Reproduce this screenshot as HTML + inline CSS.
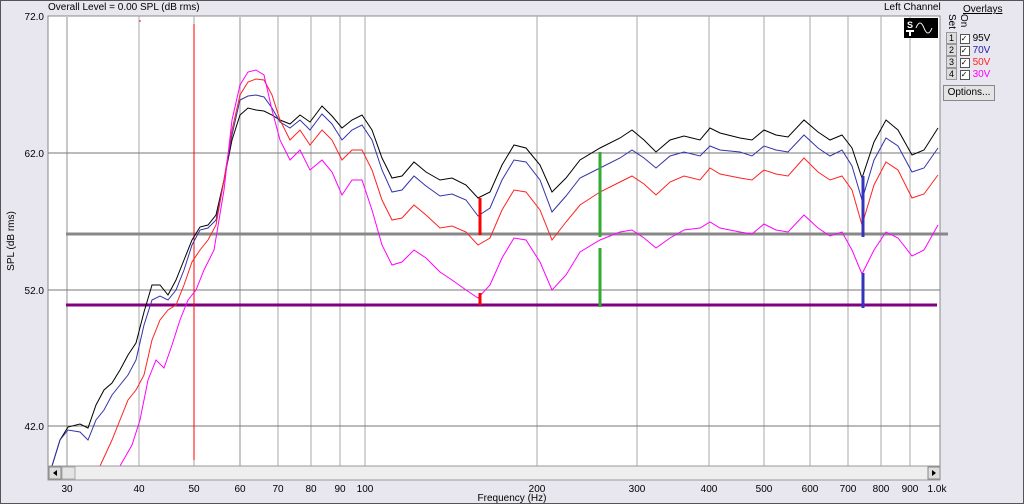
<!DOCTYPE html><html><head><style>
body{margin:0;width:1024px;height:504px;background:#e8e6ee;font-family:"Liberation Sans",sans-serif;font-size:10px;position:relative;overflow:hidden}
.t{position:absolute;white-space:nowrap}
</style></head><body>
<div style="position:absolute;left:0;top:0;width:1022px;height:502px;border:1px solid #555"></div>
<div class="t" style="left:48px;top:2px">Overall Level = 0.00 SPL (dB rms)</div>
<div class="t" style="left:884px;top:2px">Left Channel</div>
<svg width="1024" height="504" style="position:absolute;left:0;top:0" font-family="Liberation Sans" font-size="10">
<rect x="48" y="16" width="892" height="450" fill="#fff" stroke="#888"/>
<g stroke="#aaa" stroke-width="1">
<line x1="67" y1="16" x2="67" y2="466" stroke="#c8c8c8" stroke-width="2"/>
<line x1="139" y1="16" x2="139" y2="466"/>
<line x1="194" y1="16" x2="194" y2="466"/>
<line x1="240" y1="16" x2="240" y2="466" stroke="#c8c8c8" stroke-width="2"/>
<line x1="278" y1="16" x2="278" y2="466"/>
<line x1="311" y1="16" x2="311" y2="466"/>
<line x1="340" y1="16" x2="340" y2="466"/>
<line x1="365" y1="16" x2="365" y2="466"/>
<line x1="537" y1="16" x2="537" y2="466"/>
<line x1="637" y1="16" x2="637" y2="466"/>
<line x1="709" y1="16" x2="709" y2="466"/>
<line x1="764" y1="16" x2="764" y2="466"/>
<line x1="810" y1="16" x2="810" y2="466"/>
<line x1="848" y1="16" x2="848" y2="466"/>
<line x1="881" y1="16" x2="881" y2="466"/>
<line x1="910" y1="16" x2="910" y2="466"/>
</g>
<g stroke="#777"><line x1="48" y1="153" x2="940" y2="153"/><line x1="48" y1="290" x2="940" y2="290"/><line x1="48" y1="426" x2="940" y2="426"/></g>
<line x1="66" y1="234" x2="948" y2="234" stroke="#888" stroke-width="3"/>
<line x1="66" y1="305" x2="937" y2="305" stroke="#800080" stroke-width="3"/>
<line x1="194" y1="24" x2="194" y2="460" stroke="#f00"/>
<polyline fill="none" stroke="#000" points="52,466 60,440 68,427 80,424 88,428 96,405 104,390 112,383 120,370 128,355 136,343 144,312 152,285 160,285 168,295 176,280 184,260 192,240 200,227 208,225 216,215 224,180 232,140 240,115 248,108 256,110 264,111 272,115 280,120 290,124 300,115 310,122 322,106 332,116 342,128 352,120 362,115 372,130 382,158 392,178 402,176 414,162 426,172 440,180 452,178 466,185 478,198 490,192 502,165 514,145 526,148 540,165 552,192 566,178 580,160 600,148 620,138 632,130 644,140 656,152 670,140 684,136 700,140 710,128 720,133 740,138 752,140 764,130 776,135 788,137 804,120 818,132 830,140 842,135 852,148 862,178 874,142 886,120 898,130 912,155 924,150 938,128"/>
<polyline fill="none" stroke="#33a" points="52,466 60,440 68,430 80,432 88,440 96,420 104,410 112,395 120,385 128,375 136,360 144,325 152,300 160,296 168,300 176,290 184,270 192,245 200,230 208,228 216,220 224,180 232,135 240,100 248,96 256,95 264,97 272,108 280,122 290,128 300,120 310,130 322,114 332,124 342,140 352,130 362,125 372,140 382,170 392,192 402,190 414,176 426,186 440,196 452,194 466,200 478,216 490,208 502,180 514,160 526,162 540,180 552,212 566,196 580,178 600,168 620,158 632,150 644,158 656,168 670,156 684,152 700,156 710,146 720,150 740,152 752,156 764,146 776,150 788,152 804,135 818,148 830,156 842,150 852,166 862,200 874,160 886,138 898,146 912,172 924,168 938,148"/>
<polyline fill="none" stroke="#f22" points="100,466 112,440 120,420 128,400 136,390 144,375 152,340 160,320 168,310 176,305 184,285 192,262 200,250 208,240 216,225 224,180 232,130 240,95 248,82 256,79 264,80 272,95 280,120 290,140 300,130 310,145 322,130 332,140 342,160 352,150 362,150 372,170 382,200 392,220 402,218 414,205 426,215 440,228 452,226 466,232 478,245 490,238 502,210 514,190 526,192 540,210 552,240 566,222 580,205 600,192 620,182 632,176 644,184 656,195 670,182 684,176 700,180 710,168 720,174 740,178 752,180 764,170 776,174 788,176 804,158 818,172 830,180 842,176 852,190 862,225 874,185 886,162 898,170 912,198 924,194 938,175"/>
<polyline fill="none" stroke="#f0f" points="52,466 120,466 132,445 140,420 148,380 156,360 164,368 172,345 180,320 188,300 196,290 204,270 214,250 224,190 232,120 240,85 248,72 256,70 264,75 272,110 280,140 290,160 300,150 310,170 322,160 332,172 342,195 352,180 362,180 372,210 382,245 392,265 402,262 414,250 426,258 440,272 452,280 466,290 478,298 490,285 502,258 514,238 526,240 540,262 552,290 566,275 580,252 600,240 620,232 632,230 644,238 656,248 670,238 684,230 700,228 710,222 720,228 740,232 752,234 764,224 776,230 788,232 804,215 818,228 830,236 842,232 852,250 862,274 874,250 886,232 898,238 912,256 924,250 938,225"/>
<g stroke-width="3"><line x1="480" y1="198" x2="480" y2="235" stroke="#f00"/><line x1="480" y1="293" x2="480" y2="305" stroke="#f00"/>
<line x1="600" y1="152" x2="600" y2="237" stroke="#3a3"/><line x1="600" y1="248" x2="600" y2="307" stroke="#3a3"/>
<line x1="863" y1="176" x2="863" y2="237" stroke="#33b"/><line x1="863" y1="273" x2="863" y2="308" stroke="#33b"/></g>
<line x1="139" y1="21" x2="141" y2="21" stroke="#f00"/>
<rect x="48" y="466" width="892" height="14" fill="#eee" stroke="#999"/>
<rect x="49" y="467" width="12" height="12" fill="#ddd" stroke="#888"/><path d="M53 473 l4-3 v6z"/>
<rect x="62" y="467" width="13" height="12" fill="#e4e4e4" stroke="#aaa"/>
<rect x="928" y="467" width="12" height="12" fill="#ddd" stroke="#888"/><path d="M936 473 l-4-3 v6z"/>
<g text-anchor="end"><text x="44" y="20">72.0</text><text x="44" y="157">62.0</text><text x="44" y="294">52.0</text><text x="44" y="430">42.0</text></g>
<g text-anchor="middle"><text x="67" y="492">30</text><text x="139" y="492">40</text><text x="194" y="492">50</text><text x="240" y="492">60</text><text x="278" y="492">70</text><text x="311" y="492">80</text><text x="340" y="492">90</text><text x="365" y="492">100</text><text x="537" y="492">200</text><text x="637" y="492">300</text><text x="709" y="492">400</text><text x="764" y="492">500</text><text x="810" y="492">600</text><text x="848" y="492">700</text><text x="881" y="492">800</text><text x="910" y="492">900</text><text x="937" y="492">1.0k</text>
<text x="512" y="501">Frequency (Hz)</text></g>
<text transform="translate(14,241) rotate(-90)" text-anchor="middle">SPL (dB rms)</text>
<rect x="904" y="18" width="34" height="20" fill="#000"/>
<text x="907" y="28" fill="#fff" font-weight="bold" font-size="9">S</text><rect x="906" y="30" width="8" height="2" fill="#fff"/><rect x="909" y="30" width="2" height="6" fill="#fff"/>
<path d="M916 28 q4-10 8 0 t8 0" stroke="#fff" fill="none"/>
</svg>
<div class="t" style="left:963px;top:4px;text-decoration:underline">Overlays</div>
<div class="t" style="left:945px;top:14px;transform:rotate(90deg);transform-origin:0 0;left:957px;font-size:10px">Set</div>
<div class="t" style="left:969px;top:14px;transform:rotate(90deg);transform-origin:0 0">On</div>
<div style="position:absolute;left:946px;top:32px;font-size:10px;line-height:12px">
<div style="height:12px"><span style="display:inline-block;width:9px;height:10px;background:#ddd;border:1px solid #999;text-align:center;line-height:10px;font-size:9px">1</span> <span style="display:inline-block;width:8px;height:8px;border:1px solid #555;background:#fff;font-size:8px;line-height:8px">✓</span> <span>95V</span></div>
<div style="height:12px"><span style="display:inline-block;width:9px;height:10px;background:#ddd;border:1px solid #999;text-align:center;line-height:10px;font-size:9px">2</span> <span style="display:inline-block;width:8px;height:8px;border:1px solid #555;background:#fff;font-size:8px;line-height:8px">✓</span> <span style="color:#22a">70V</span></div>
<div style="height:12px"><span style="display:inline-block;width:9px;height:10px;background:#ddd;border:1px solid #999;text-align:center;line-height:10px;font-size:9px">3</span> <span style="display:inline-block;width:8px;height:8px;border:1px solid #555;background:#fff;font-size:8px;line-height:8px">✓</span> <span style="color:#f22">50V</span></div>
<div style="height:12px"><span style="display:inline-block;width:9px;height:10px;background:#ddd;border:1px solid #999;text-align:center;line-height:10px;font-size:9px">4</span> <span style="display:inline-block;width:8px;height:8px;border:1px solid #555;background:#fff;font-size:8px;line-height:8px">✓</span> <span style="color:#f0f">30V</span></div>
</div>
<div class="t" style="left:943px;top:85px;width:50px;height:14px;border:1px solid #888;background:#e4e4e4;text-align:center;line-height:14px">Options...</div>
</body></html>
